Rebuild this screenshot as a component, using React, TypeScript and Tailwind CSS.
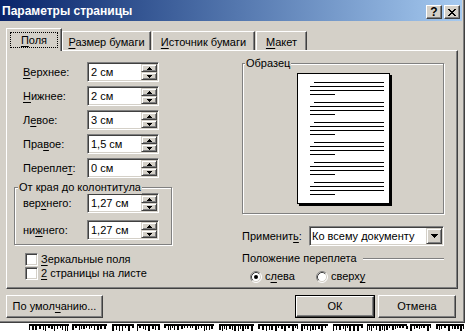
import React from "react";

const raised =
  "border border-t-white border-l-white border-r-[#404040] border-b-[#404040] shadow-[inset_-1px_-1px_0_#808080]";
const sunken =
  "border border-t-[#808080] border-l-[#808080] border-r-white border-b-white shadow-[inset_1px_1px_0_#404040,inset_-1px_-1px_0_#d4d0c8]";
const etched =
  "border border-[#808080] shadow-[1px_1px_0_#fff,inset_1px_1px_0_#fff]";
const smallBtn =
  "flex items-center justify-center bg-[#d4d0c8] border border-t-[#d4d0c8] border-l-[#d4d0c8] border-r-[#404040] border-b-[#404040] shadow-[inset_1px_1px_0_#fff,inset_-1px_-1px_0_#808080]";

function U({ children }: { children: React.ReactNode }) {
  return <span className="underline decoration-1 underline-offset-[2px]">{children}</span>;
}

function UpArrow() {
  return (
    <svg width="5" height="3" className="block" shapeRendering="crispEdges">
      <path d="M2 0H3V1H4V2H5V3H0V2H1V1H2Z" fill="#000" />
    </svg>
  );
}
function DownArrow() {
  return (
    <svg width="5" height="3" className="block" shapeRendering="crispEdges">
      <path d="M0 0H5V1H4V2H3V3H2V2H1V1H0Z" fill="#000" />
    </svg>
  );
}

function SpinField({ value }: { value: string }) {
  return (
    <div className={`w-[72px] h-[20px] bg-white flex p-[1px] ${sunken}`}>
      <div className="flex-1 pl-[2px] leading-[16px] whitespace-nowrap">{value}</div>
      <div className="flex flex-col w-[16px] h-[16px]">
        <div className={`${smallBtn} h-[8px]`}>
          <UpArrow />
        </div>
        <div className={`${smallBtn} h-[8px]`}>
          <DownArrow />
        </div>
      </div>
    </div>
  );
}

function Row({ label, value }: { label: React.ReactNode; value: string }) {
  return (
    <div className="flex items-center h-[20px]">
      <div className="w-[64px] whitespace-nowrap">{label}</div>
      <SpinField value={value} />
    </div>
  );
}

function Checkbox({ label }: { label: React.ReactNode }) {
  return (
    <div className="flex items-center h-[13px] gap-[3px]">
      <div className={`w-[13px] h-[13px] bg-white ${sunken}`} />
      <div className="whitespace-nowrap">{label}</div>
    </div>
  );
}

function Radio({ checked }: { checked?: boolean }) {
  return (
    <svg width="12" height="12" className="block shrink-0">
      <circle cx="6" cy="6" r="5" fill="#fff" />
      <path d="M2.11 9.89A5.5 5.5 0 0 1 9.89 2.11" stroke="#808080" strokeWidth="1" fill="none" />
      <path d="M9.89 2.11A5.5 5.5 0 0 1 2.11 9.89" stroke="#fff" strokeWidth="1" fill="none" />
      <path d="M2.82 9.18A4.5 4.5 0 0 1 9.18 2.82" stroke="#404040" strokeWidth="1" fill="none" />
      <path d="M9.18 2.82A4.5 4.5 0 0 1 2.82 9.18" stroke="#d4d0c8" strokeWidth="1" fill="none" />
      {checked && <circle cx="6" cy="6" r="2" fill="#000" />}
    </svg>
  );
}

function PagePreview() {
  const rects: React.ReactNode[] = [];
  for (let g = 0; g < 6; g++) {
    const y = 8 + g * 20;
    rects.push(<rect key={`a${g}`} x={16} y={y} width={70} height={1} />);
    rects.push(<rect key={`b${g}`} x={12} y={y + 4} width={74} height={1} />);
    rects.push(<rect key={`c${g}`} x={12} y={y + 8} width={74} height={1} />);
    rects.push(<rect key={`d${g}`} x={12} y={y + 12} width={25} height={1} />);
  }
  return (
    <div className="ml-[54px] mt-[9px] w-[93px] h-[131px] bg-white border border-black shadow-[2px_2px_0_#000]">
      <svg width="91" height="129" className="block" shapeRendering="crispEdges" fill="#000">
        {rects}
      </svg>
    </div>
  );
}

function DocStrip() {
  let seed = 12345;
  const rnd = () => {
    seed = (seed * 1103515245 + 12345) % 2147483648;
    return seed / 2147483648;
  };
  const items: React.ReactNode[] = [];
  let x = 29;
  let k = 0;
  while (x < 465) {
    const wordLen = 14 + Math.floor(rnd() * 40);
    const end = Math.min(465, x + wordLen);
    items.push(<rect key={`h${k}`} x={x} y={1} width={end - x} height={2} />);
    let cx = x;
    while (cx < end) {
      const w = 1 + Math.floor(rnd() * 2);
      const h = 2 + Math.floor(rnd() * 4);
      items.push(<rect key={`v${k}_${cx}`} x={cx} y={3} width={w} height={h} />);
      cx += w + 1 + Math.floor(rnd() * 2);
    }
    x = end + 3 + Math.floor(rnd() * 3);
    k++;
  }
  return (
    <svg width="465" height="8" className="block" shapeRendering="crispEdges" fill="#000">
      {items}
    </svg>
  );
}

function Tab({ w, ml, children }: { w: number; ml?: boolean; children: React.ReactNode }) {
  return (
    <div
      style={{ width: w }}
      className={`${ml ? "ml-[1px]" : ""} h-[19px] bg-[#d4d0c8] border-t border-l border-r border-t-white border-l-white border-r-[#404040] shadow-[inset_-1px_0_0_#808080] flex justify-center pt-[3px] whitespace-nowrap`}
    >
      {children}
    </div>
  );
}

export default function App() {
  return (
    <div className="w-[465px] h-[331px] overflow-hidden bg-white flex flex-col font-['Liberation_Sans',Arial,sans-serif] text-[11px] leading-[13px] text-black">
      <div className="h-[323px] shrink-0 bg-[#d4d0c8] flex flex-col border-r border-b border-r-[#404040] border-b-[#404040] shadow-[inset_-1px_-1px_0_#808080]">
        {/* Title bar */}
        <div className="h-[21px] mr-[2px] flex bg-linear-to-r from-[#0a246a] to-[#a6caf0] pl-[2px] pr-[2px]">
          <div className="self-center pt-[2px] text-white font-bold text-[12px] leading-[15px] whitespace-nowrap">
            Параметры страницы
          </div>
          <div className="ml-auto self-end mb-[2px] flex gap-[2px]">
            <div className={`w-[16px] h-[14px] bg-[#d4d0c8] ${raised} flex items-center justify-center font-bold text-[12px] leading-[12px]`}>
              ?
            </div>
            <div className={`w-[16px] h-[14px] bg-[#d4d0c8] ${raised} flex items-center justify-center`}>
              <svg width="8" height="7" className="block" shapeRendering="crispEdges">
                <path
                  d="M0 0H2V1H3V2H5V1H6V0H8V1H7V2H6V3H5V4H6V5H7V6H8V7H6V6H5V5H3V6H2V7H0V6H1V5H2V4H3V3H2V2H1V1H0Z"
                  fill="#000"
                />
              </svg>
            </div>
          </div>
        </div>

        {/* Tabs */}
        <div className="h-[22px] mt-[7px] pl-[6px] flex items-end">
          <div className="relative z-10 -mb-px h-[23px] w-[56px] bg-[#d4d0c8] border-t border-l border-r border-t-white border-l-white border-r-[#404040] shadow-[inset_-1px_0_0_#808080] flex justify-center pt-[3px]">
            <span className="w-[48px] h-[16px] border border-dotted border-black text-center pt-[1px] leading-[13px]">
              <U>П</U>оля
            </span>
          </div>
          <Tab w={89}>
            <span className="pt-[1px]">
              <U>Р</U>азмер бумаги
            </span>
          </Tab>
          <Tab w={103} ml>
            <span className="pt-[1px]">
              <U>И</U>сточник бумаги
            </span>
          </Tab>
          <Tab w={51} ml>
            <span className="pt-[1px]">
              <U>М</U>акет
            </span>
          </Tab>
        </div>

        {/* Panel */}
        <div className={`ml-[6px] w-[452px] h-[239px] flex bg-[#d4d0c8] ${raised}`}>
          {/* Left column */}
          <div className="ml-[7px] mt-[11px] w-[158px] flex flex-col">
            <div className="flex flex-col gap-[4px] pl-[9px]">
              <Row label={<><U>В</U>ерхнее:</>} value="2 см" />
              <Row label={<><U>Н</U>ижнее:</>} value="2 см" />
              <Row label={<>Л<U>е</U>вое:</>} value="3 см" />
              <Row label={<>Пра<U>в</U>ое:</>} value="1,5 см" />
              <Row label={<>Перепле<U>т</U>:</>} value="0 см" />
            </div>
            <div className={`relative mt-[9px] h-[58px] pl-[8px] pt-[5px] flex flex-col gap-[7px] ${etched}`}>
              <span className="absolute -top-[7px] left-[3px] px-[1px] bg-[#d4d0c8] leading-[13px] whitespace-nowrap">
                От края до колонтитула
              </span>
              <Row label={<>вер<U>х</U>него:</>} value="1,27 см" />
              <Row label={<>ни<U>ж</U>него:</>} value="1,27 см" />
            </div>
            <div className="mt-[8px] ml-[11px] flex flex-col gap-[1px]">
              <Checkbox label={<><U>З</U>еркальные поля</>} />
              <Checkbox label={<><U>2</U> страницы на листе</>} />
            </div>
          </div>

          {/* Right column */}
          <div className="ml-[70px] mt-[12px] w-[202px] flex flex-col">
            <div className={`relative h-[151px] ${etched}`}>
              <span className="absolute -top-[7px] left-[2px] px-[1px] bg-[#d4d0c8] leading-[13px] whitespace-nowrap">
                Образец
              </span>
              <PagePreview />
            </div>
            <div className="mt-[12px] h-[20px] flex items-center">
              <div className="w-[67px] whitespace-nowrap">
                Применит<U>ь</U>:
              </div>
              <div className={`w-[135px] h-[20px] bg-white flex p-[1px] ${sunken}`}>
                <div className="flex-1 pl-[1px] leading-[16px] whitespace-nowrap">Ко всему документу</div>
                <div className={`${smallBtn} w-[16px] h-[16px]`}>
                  <svg width="7" height="4" className="block" shapeRendering="crispEdges">
                    <path d="M0 0H7V1H6V2H5V3H4V4H3V3H2V2H1V1H0Z" fill="#000" />
                  </svg>
                </div>
              </div>
            </div>
            <div className="mt-[6px] h-[13px] flex items-center">
              <div className="whitespace-nowrap">Положение переплета</div>
              <div className="flex-1 ml-[6px] h-0 border-t border-t-[#808080] border-b border-b-white" />
            </div>
            <div className="mt-[5px] h-[13px] flex items-center pl-[8px]">
              <div className="w-[66px] flex items-center gap-[3px]">
                <Radio checked />
                <span>
                  с<U>л</U>ева
                </span>
              </div>
              <div className="flex items-center gap-[3px]">
                <Radio />
                <span>
                  сверх<U>у</U>
                </span>
              </div>
            </div>
          </div>
        </div>

        {/* Buttons */}
        <div className="mt-[6px] h-[23px] flex pl-[6px] pr-[8px]">
          <div className={`w-[97px] h-[23px] bg-[#d4d0c8] flex items-center justify-center ${raised}`}>
            По умол<U>ч</U>анию...
          </div>
          <div className="ml-auto w-[80px] h-[23px] border border-black flex">
            <div className={`flex-1 bg-[#d4d0c8] flex items-center justify-center ${raised}`}>ОК</div>
          </div>
          <div className={`ml-[3px] w-[78px] h-[23px] bg-[#d4d0c8] flex items-center justify-center ${raised}`}>
            Отмена
          </div>
        </div>
      </div>
      <DocStrip />
    </div>
  );
}
